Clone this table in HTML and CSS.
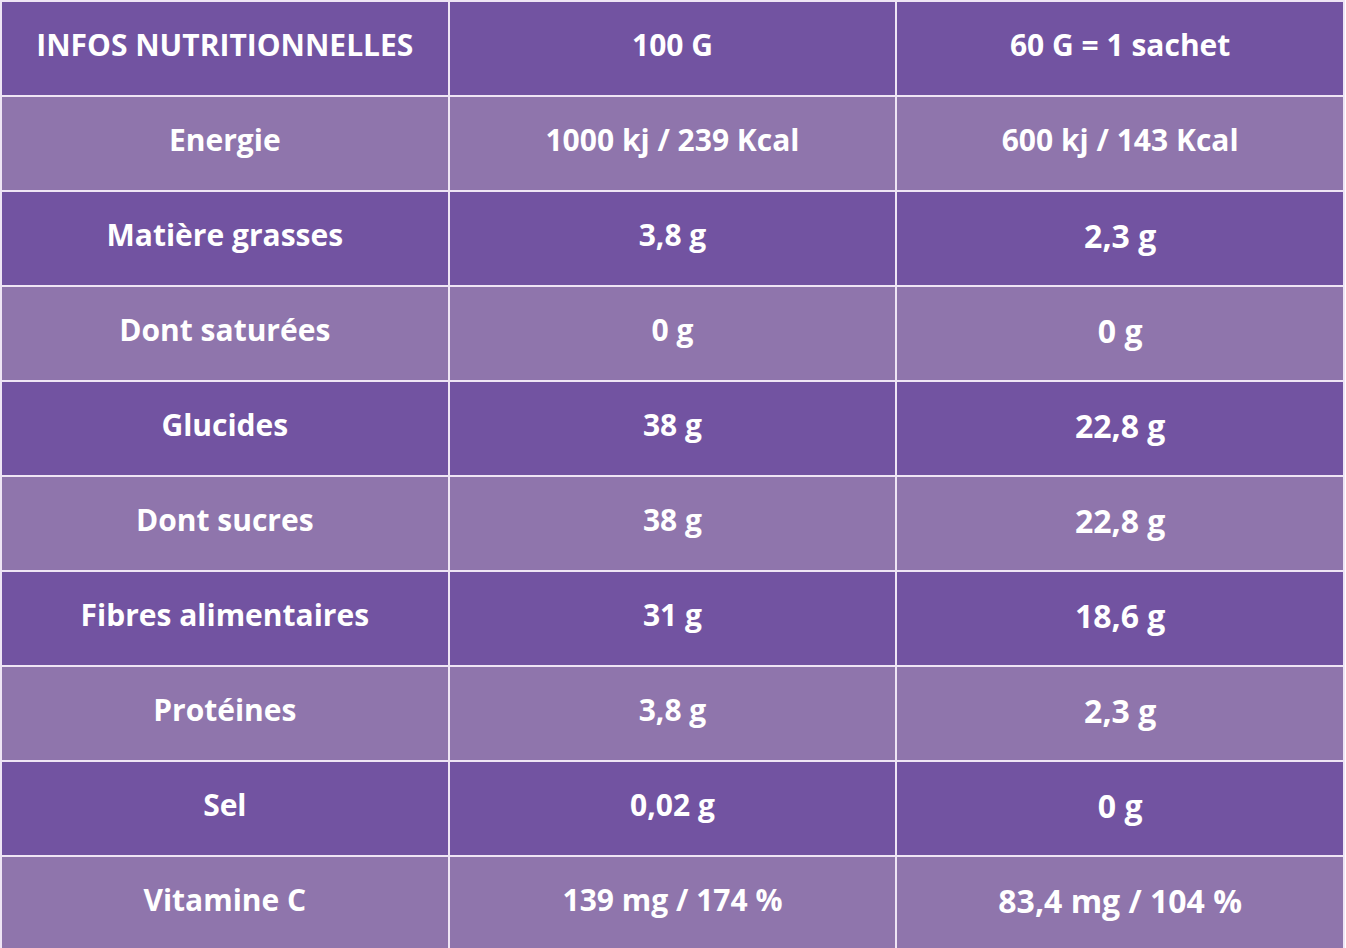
FILE: index.html
```html
<!DOCTYPE html>
<html lang="fr">
<head>
<meta charset="utf-8">
<title>Infos nutritionnelles</title>
<link rel="stylesheet" href="styles.css">
</head>
<body>
<table class="nutri">
  <tbody>
    <tr class="dark"><td>INFOS NUTRITIONNELLES</td><td>100 G</td><td>60 G = 1 sachet</td></tr>
    <tr class="light"><td>Energie</td><td>1000 kj / 239 Kcal</td><td>600 kj / 143 Kcal</td></tr>
    <tr class="dark"><td>Matière grasses</td><td>3,8 g</td><td class="big">2,3 g</td></tr>
    <tr class="light"><td>Dont saturées</td><td>0 g</td><td class="big">0 g</td></tr>
    <tr class="dark"><td>Glucides</td><td>38 g</td><td class="big">22,8 g</td></tr>
    <tr class="light"><td>Dont sucres</td><td>38 g</td><td class="big">22,8 g</td></tr>
    <tr class="dark"><td>Fibres alimentaires</td><td>31 g</td><td class="big">18,6 g</td></tr>
    <tr class="light"><td>Protéines</td><td>3,8 g</td><td class="big">2,3 g</td></tr>
    <tr class="dark"><td>Sel</td><td>0,02 g</td><td class="big">0 g</td></tr>
    <tr class="light"><td>Vitamine C</td><td>139 mg / 174 %</td><td class="big">83,4 mg / 104 %</td></tr>
  </tbody>
</table>
</body>
</html>
```
FILE: styles.css
```css
html, body {
  margin: 0;
  padding: 0;
  background: #ffffff;
}
body {
  font-family: "Open Sans", "Noto Sans", sans-serif;
  overflow: hidden;
}
.nutri {
  border-collapse: collapse;
  width: 1345px;
  table-layout: fixed;
}
.nutri td {
  border: 2px solid #efe5f5;
  height: 95px;
  padding: 0 0 7px 0;
  text-align: center;
  vertical-align: middle;
  color: #ffffff;
  font-size: 30px;
  font-weight: 700;
  line-height: 1;
  box-sizing: border-box;
}
.nutri td.big {
  font-size: 32px;
  padding: 0 0 5px 0;
}
.dark td {
  background: #7253a1;
}
.light td {
  background: #8f75ac;
}
```
